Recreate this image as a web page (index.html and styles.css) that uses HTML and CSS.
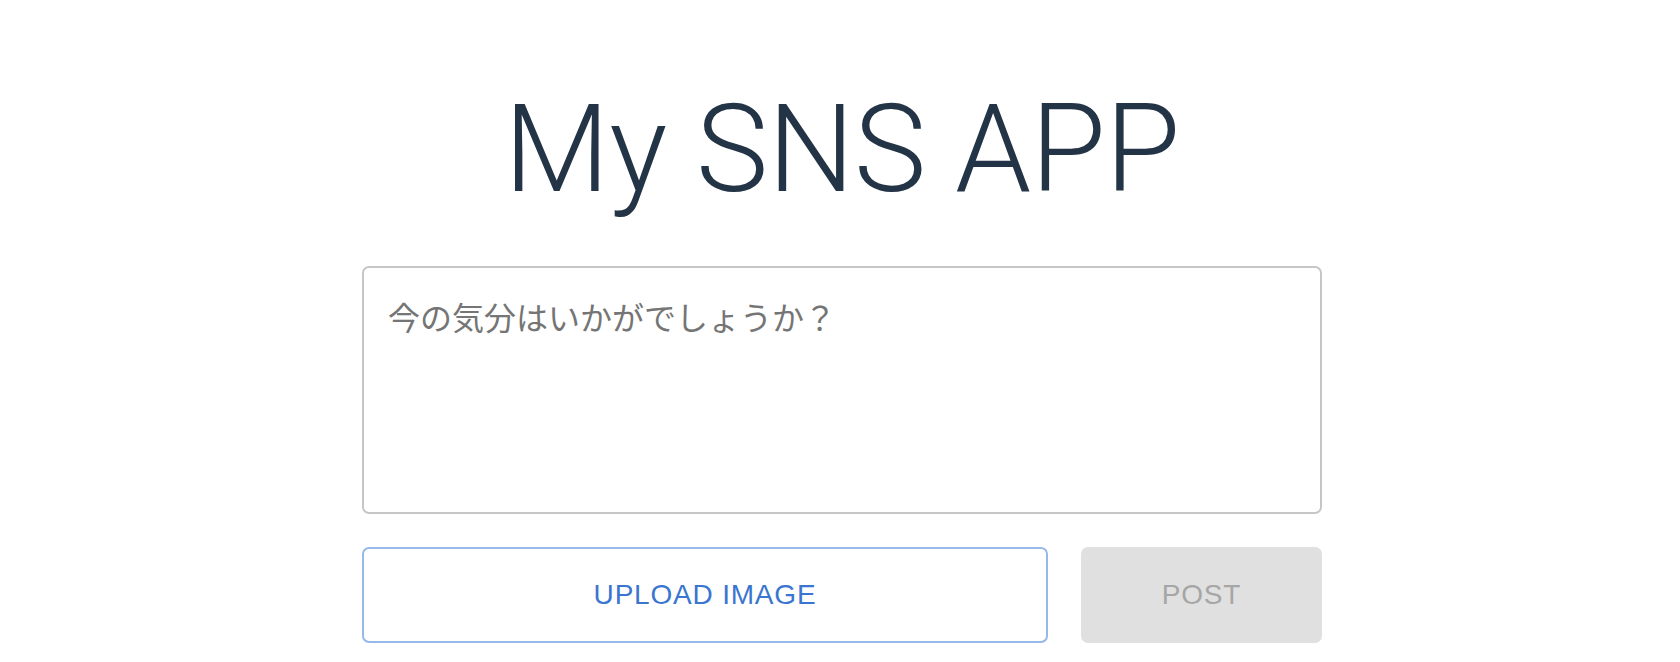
FILE: index.html
```html
<!DOCTYPE html>
<html lang="ja">
<head>
<meta charset="utf-8">
<title>My SNS APP</title>
<link rel="stylesheet" href="styles.css">
</head>
<body>
<main class="page">
  <h1 class="title">My SNS APP</h1>
  <form class="composer">
    <textarea class="composer-input" placeholder="今の気分はいかがでしょうか？"></textarea>
    <div class="composer-actions">
      <button type="button" class="btn btn-upload">UPLOAD IMAGE</button>
      <button type="button" class="btn btn-post" disabled>POST</button>
    </div>
  </form>
</main>
</body>
</html>
```

FILE: styles.css
```css
html, body {
  margin: 0;
  padding: 0;
  background: #ffffff;
}

body {
  font-family: "Liberation Sans", "Noto Sans CJK JP", sans-serif;
}

.page {
  display: flex;
  flex-direction: column;
  align-items: center;
  padding: 89px 0 19px 4px;
}

.title {
  margin: 0 0 55px 0;
  font-family: Roboto, "Liberation Sans", Arial, sans-serif;
  font-weight: 300;
  font-size: 122px;
  line-height: 122px;
  letter-spacing: -0.5px;
  color: #243447;
  text-align: center;
}

.composer {
  width: 960px;
  display: flex;
  flex-direction: column;
  gap: 33px;
}

.composer-input {
  display: block;
  box-sizing: border-box;
  width: 100%;
  height: 248px;
  margin: 0;
  padding: 24px 24px;
  border: 2px solid #c6c6c6;
  border-radius: 7px;
  resize: none;
  outline: none;
  font-family: "Noto Sans CJK JP", sans-serif;
  font-size: 32px;
  line-height: 1.5;
  color: #333333;
  background: #ffffff;
}

.composer-input::placeholder {
  color: #757575;
  opacity: 1;
}

.composer-actions {
  display: flex;
  gap: 33px;
  height: 96px;
}

.btn {
  box-sizing: border-box;
  height: 96px;
  margin: 0;
  border-radius: 7px;
  font-family: "Liberation Sans", Arial, sans-serif;
  font-size: 28px;
  letter-spacing: 0.8px;
  text-transform: uppercase;
  cursor: pointer;
}

.btn-upload {
  flex: 1;
  background: #ffffff;
  border: 2px solid #97b8e8;
  color: #3a76d0;
}

.btn-post {
  width: 241px;
  flex: none;
  background: #e0e0e0;
  border: none;
  color: #a6a6a6;
}
```
